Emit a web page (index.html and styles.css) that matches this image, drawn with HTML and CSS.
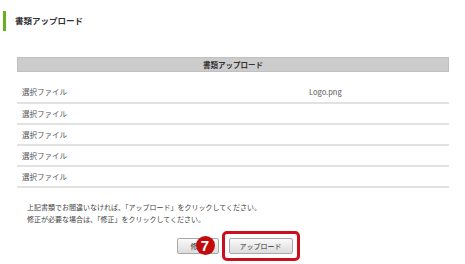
FILE: index.html
```html
<!DOCTYPE html>
<html lang="ja">
<head>
    <meta charset="UTF-8">
    <title>書類アップロード</title>
    <link rel="stylesheet" href="styles.css">
</head>
<body>
    <div class="page-title">書類アップロード</div>

    <div class="panel">
        <div class="upload-list">
            <div class="list-head">書類アップロード</div>
            <div class="file-row first-row"><span class="label">選択ファイル</span><span class="file">Logo.png</span></div>
            <div class="file-row"><span class="label">選択ファイル</span><span class="file"></span></div>
            <div class="file-row"><span class="label">選択ファイル</span><span class="file"></span></div>
            <div class="file-row"><span class="label">選択ファイル</span><span class="file"></span></div>
            <div class="file-row"><span class="label">選択ファイル</span><span class="file"></span></div>
        </div>

        <div class="notes">
            <p>上記書類でお間違いなければ、「アップロード」をクリックしてください。</p>
            <p>修正が必要な場合は、「修正」をクリックしてください。</p>
        </div>

        <div class="actions">
            <div class="btn-wrap">
                <button class="btn btn-back">修正</button>
                <span class="step">7</span>
            </div>
            <div class="highlight">
                <button class="btn">アップロード</button>
            </div>
        </div>
    </div>
</body>
</html>
```

FILE: styles.css
```css
body {
    margin: 0;
    background-color: #ffffff;
    color: #333;
    font-family: "Noto Sans CJK JP", "Liberation Sans", sans-serif;
}

.page-title {
    margin: 11px 0 0 3px;
    height: 20px;
    line-height: 18px;
    padding-left: 9px;
    border-left: 3px solid #6aad1e;
    font-size: 8.5px;
    font-weight: bold;
    color: #333;
}

.panel {
    margin: 0 16px 0 17px;
    padding-top: 26px;
}

.upload-list {
    font-size: 7.5px;
    color: #555;
}

.list-head {
    height: 13px;
    line-height: 13px;
    background-color: #cccccc;
    border: 1px solid #c0c0c0;
    text-align: center;
    font-weight: bold;
    color: #333;
}

.file-row {
    display: flex;
    align-items: center;
    height: 19px;
    padding-left: 5px;
    border-bottom: 2px solid #e2e2e2;
    line-height: 10px;
}

.file-row.first-row {
    height: 30px;
    align-items: flex-start;
}

.first-row span {
    margin-top: 15px;
}

.label {
    flex: 1;
}

.file {
    width: 140px;
}

.notes {
    padding: 13px 0 0 10px;
    font-size: 7px;
    color: #444;
}

.notes p {
    margin: 0;
    line-height: 12px;
}

.actions {
    display: flex;
    align-items: center;
    justify-content: center;
    gap: 3px;
    margin-top: 6px;
    padding-left: 10px;
}

.btn-wrap {
    position: relative;
}

.btn {
    display: block;
    height: 16px;
    padding: 0 10px;
    border: 1px solid #a8a8a8;
    border-radius: 2px;
    background: linear-gradient(#fafafa, #dcdcdc);
    font-family: inherit;
    font-size: 7px;
    line-height: 14px;
    color: #333;
}

.btn-back {
    width: 42px;
    padding: 0;
    text-align: center;
}

.step {
    position: absolute;
    left: 19px;
    top: -2px;
    width: 19px;
    height: 19px;
    border-radius: 50%;
    background-color: #c20c0c;
    color: #ffffff;
    font-family: "Liberation Sans", sans-serif;
    font-weight: bold;
    font-size: 15px;
    line-height: 20px;
    text-align: center;
}

.highlight {
    padding: 4px;
    border: 3px solid #c9101c;
    border-radius: 5px;
}
```
